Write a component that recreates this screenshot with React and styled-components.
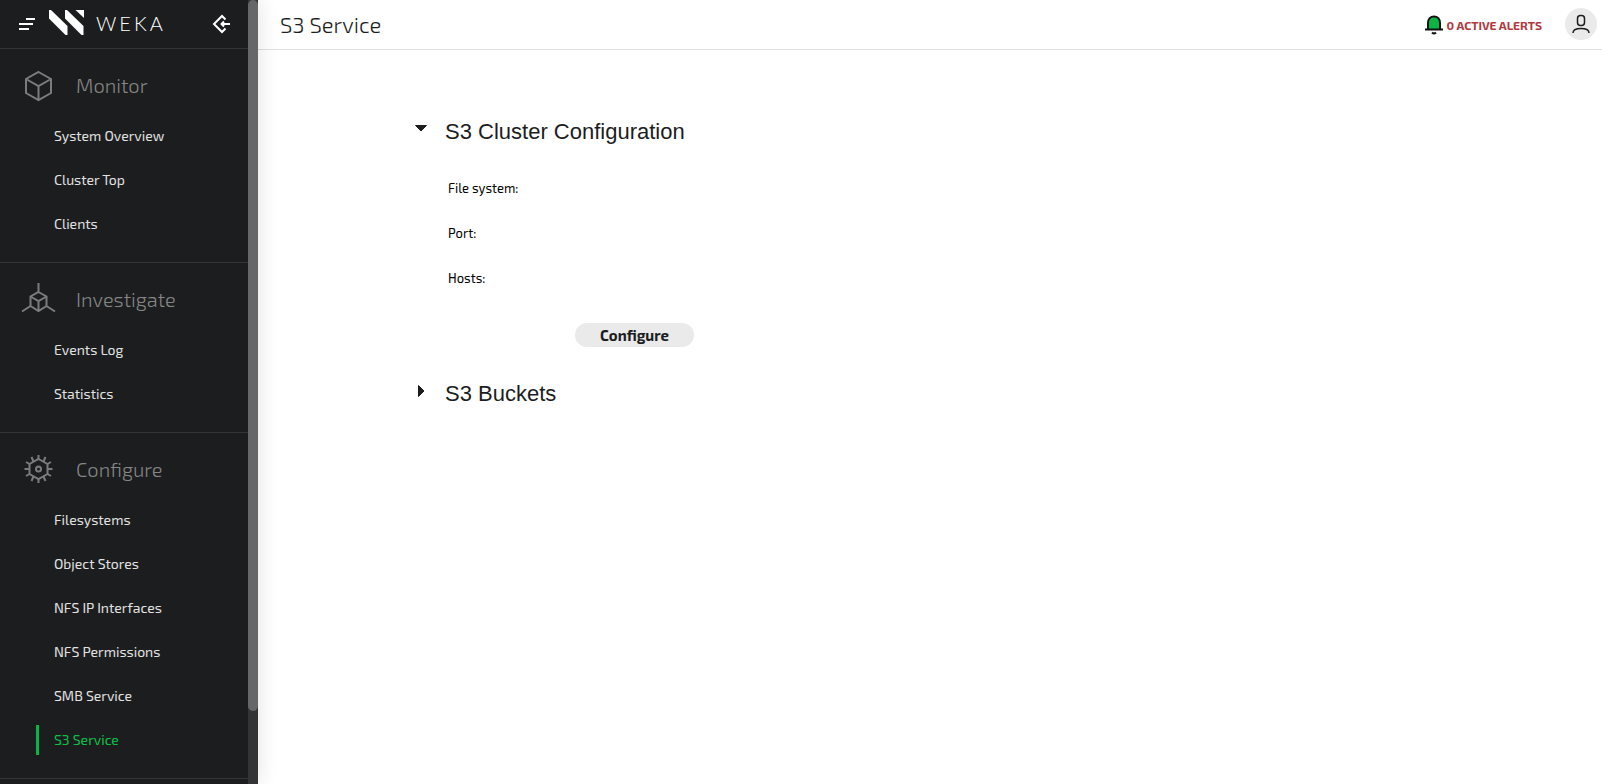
import React, { useState } from "react";
import styled, { createGlobalStyle } from "styled-components";

const GlobalStyle = createGlobalStyle`
  *, *::before, *::after { box-sizing: border-box; }
  body {
    margin: 0;
    background: #fff;
    color: #1c1d1e;
    font-family: "Exo 2", Roboto, "Liberation Sans", sans-serif;
    font-size: 14px;
  }
`;

const Page = styled.div`
  display: flex;
  height: 100vh;
  overflow: hidden;
`;

const Sidebar = styled.aside`
  display: flex;
  flex: none;
  background: #1c1d1e;
  box-shadow: 0 0 20px rgba(0, 0, 0, 0.12);
  z-index: 1;
`;

const SidebarBody = styled.div`
  width: 248px;
  overflow: hidden;
`;

const ScrollTrack = styled.div`
  width: 10px;
  background: #333435;
`;

const ScrollThumb = styled.div`
  height: 90.7%;
  border-radius: 5px;
  background: #666768;
`;

const Brand = styled.div`
  display: flex;
  align-items: center;
  height: 49px;
  padding: 0 17px 0 18px;
  border-bottom: 1px solid #333435;
  color: #fff;
`;

const IconButton = styled.button`
  display: flex;
  padding: 0;
  border: 0;
  background: none;
  color: inherit;
  cursor: pointer;
`;

const Logo = styled.a`
  display: flex;
  flex: 1;
  align-items: center;
  gap: 12px;
  margin-left: 13px;
  padding-bottom: 3px;
  color: inherit;
  text-decoration: none;
`;

const Wordmark = styled.span`
  font: 300 20px/24px Lato, sans-serif;
  letter-spacing: 3px;
`;

const Section = styled.section`
  padding: 16px 0;
  border-bottom: 1px solid #333435;
`;

const SectionTitle = styled.h2`
  display: flex;
  align-items: center;
  gap: 18px;
  height: 40px;
  margin: 0 0 9px;
  padding-left: 20px;
  color: #858686;
  font-size: 20px;
  font-weight: 300;

  svg { flex: none; color: #7b7c7c; }
`;

const NavList = styled.ul`
  margin: 0;
  padding: 0;
  list-style: none;
`;

const NavItem = styled.li`
  display: flex;
  align-items: center;
  height: 44px;
  padding-left: 36px;
`;

const NavLink = styled.a`
  height: 30px;
  padding-left: 15px;
  border-left: 3px solid ${(p) => (p.$active ? "#0bb544" : "transparent")};
  color: ${(p) => (p.$active ? "#0bc04a" : "#e2e2e2")};
  font-weight: 400;
  line-height: 30px;
  text-decoration: none;
`;

const Main = styled.main`
  flex: 1;
  min-width: 0;
`;

const TopBar = styled.header`
  display: flex;
  align-items: center;
  height: 50px;
  padding: 0 5px 2px 22px;
  border-bottom: 1px solid #e0e0e0;
`;

const PageTitle = styled.h1`
  flex: 1;
  margin: 0;
  color: #1c1d1e;
  font-size: 22px;
  font-weight: 300;
`;

const Alerts = styled.button`
  display: flex;
  align-items: center;
  gap: 4px;
  margin-right: 23px;
  padding: 2px 0 0;
  border: 0;
  background: none;
  color: #b03a40;
  font: inherit;
  font-size: 12px;
  font-weight: 700;
  cursor: pointer;
`;

const Avatar = styled.button`
  display: grid;
  place-items: center;
  width: 32px;
  height: 32px;
  padding: 0;
  border: 0;
  border-radius: 50%;
  background: #eaeaea;
  cursor: pointer;
`;

const Content = styled.div`
  max-width: 1030px;
  margin: 0 auto;
  padding-top: 62px;
`;

const PanelHeading = styled.h2`
  margin: 0;
  font-size: 22px;
  font-weight: 400;
`;

const PanelToggle = styled.button`
  display: flex;
  align-items: center;
  gap: 18px;
  height: 40px;
  padding: 0;
  border: 0;
  background: none;
  color: #1c1d1e;
  font: 400 22px/40px "Liberation Sans", Arial, sans-serif;
  cursor: pointer;

  svg { flex: none; margin-bottom: 6px; }
`;

const Form = styled.div`
  width: 373px;
  margin: 0 0 27px 33px;
  padding-top: 13px;
`;

const Details = styled.dl`
  margin: 0 0 23px;
`;

const Detail = styled.div`
  display: flex;
  height: 45px;
  align-items: center;
  color: #000;

  dt { font-size: 13px; }
  dd { margin: 0; }
`;

const ConfigureButton = styled.button`
  display: block;
  width: 119px;
  height: 24px;
  margin: 0 auto;
  padding: 0;
  border: 0;
  border-radius: 12px;
  background: #eaeaea;
  color: #1c1d1e;
  font: inherit;
  font-size: 15px;
  font-weight: 700;
  line-height: 24px;
  cursor: pointer;
`;

const MenuIcon = () => (
  <svg width="18" height="14" viewBox="0 0 18 14" fill="none" stroke="currentColor" strokeWidth="2">
    <path d="M8 2h9M1 7h14M1 12h10" />
  </svg>
);

const LogoMark = () => (
  <svg width="35" height="25" viewBox="0 0 35 25" fill="currentColor">
    <path d="M0 0H2L18.500 16V25H16.500L0 8.500ZM16 0H18L34.500 16V25H32.500L16 8.500ZM26.500 0H35V8Z" />
  </svg>
);

const CollapseIcon = () => (
  <svg width="20" height="20" viewBox="0 0 20 20" fill="none" stroke="currentColor" strokeWidth="2">
    <path d="M14.500 5.500L11 2L3 10L11 18L14.500 14.500M19 10H10M13 7.500L10.500 10L13 12.500" />
  </svg>
);

const MonitorIcon = () => (
  <svg width="38" height="34" viewBox="0 0 38 34" fill="none" stroke="currentColor" strokeWidth="2">
    <path d="M18.500 4L31 11V25L18.500 32L6 25V11ZM6 11L18.500 18L31 11M18.500 18V32" />
  </svg>
);

const InvestigateIcon = () => (
  <svg width="38" height="34" viewBox="0 0 38 34" fill="none" stroke="currentColor" strokeWidth="2">
    <path d="M18.500 1V10M18.500 10L26.500 14.500V24L18.500 29L10.500 24V14.500ZM10.500 14.500L18.500 19L26.500 14.500M18.500 19V29M10.500 24L2 29.500M26.500 24L35 29.500" />
  </svg>
);

const ConfigureIcon = () => (
  <svg width="38" height="34" viewBox="0 0 38 34" fill="none" stroke="currentColor" strokeWidth="2">
    <path d="M18.500 7L27.500 12V22L18.500 27L9.500 22V12Z" />
    <circle cx="18.500" cy="17" r="2.500" />
    <path d="M18.500 7V3M18.500 27V31M9.500 17H4.500M27.500 17H32.500M13.500 9.500L11.500 5M23.500 9.500L25.500 5M9.500 12L6 10M27.500 12L31 10M9.500 22L6 24M27.500 22L31 24M13.500 24.500L11.500 29M23.500 24.500L25.500 29" />
  </svg>
);

const BellIcon = () => (
  <svg width="18" height="20" viewBox="0 0 18 20">
    <path d="M3.500 14.500V8C3.500 4 6 2 9 2S14.500 4 14.500 8V14.500Z" fill="#0bb544" />
    <path d="M0 14.500H18M3 14.500V8C3 4 5.500 1.500 9 1.500S15 4 15 8V14.500M7 17.500Q9 19.500 11 17.500" fill="none" stroke="#111" strokeWidth="2" />
  </svg>
);

const UserIcon = () => (
  <svg width="18" height="20" viewBox="0 0 18 20" fill="none" stroke="#1c1d1e" strokeWidth="1.500">
    <rect x="5.500" y="1.500" width="7" height="10" rx="3" />
    <path d="M1 19C1 16 4 14.500 9 14.500S17 16 17 19" />
  </svg>
);

const Caret = ({ open }) => (
  <svg width="12" height="12" viewBox="0 0 12 12" fill="currentColor" stroke="currentColor" strokeLinejoin="round">
    <path d={open ? "M0.500 2.500H11.500L6 8Z" : "M3.500 0.500V11.500L9 6Z"} />
  </svg>
);

const sections = [
  { title: "Monitor", Icon: MonitorIcon, items: ["System Overview", "Cluster Top", "Clients"] },
  { title: "Investigate", Icon: InvestigateIcon, items: ["Events Log", "Statistics"] },
  {
    title: "Configure",
    Icon: ConfigureIcon,
    items: ["Filesystems", "Object Stores", "NFS IP Interfaces", "NFS Permissions", "SMB Service", "S3 Service"],
  },
];

const fields = ["File system:", "Port:", "Hosts:"];

function Panel({ title, defaultOpen = false, children }) {
  const [open, setOpen] = useState(defaultOpen);
  return (
    <section>
      <PanelHeading>
        <PanelToggle type="button" aria-expanded={open} onClick={() => setOpen(!open)}>
          <Caret open={open} />
          {title}
        </PanelToggle>
      </PanelHeading>
      {open && children}
    </section>
  );
}

export default function App() {
  return (
    <>
      <GlobalStyle />
      <Page>
        <Sidebar>
          <SidebarBody>
            <Brand>
              <IconButton type="button" aria-label="Menu"><MenuIcon /></IconButton>
              <Logo href="#"><LogoMark /><Wordmark>WEKA</Wordmark></Logo>
              <IconButton type="button" aria-label="Collapse sidebar"><CollapseIcon /></IconButton>
            </Brand>
            <nav>
              {sections.map(({ title, Icon, items }) => (
                <Section key={title}>
                  <SectionTitle><Icon />{title}</SectionTitle>
                  <NavList>
                    {items.map((item) => (
                      <NavItem key={item}>
                        <NavLink href="#" $active={item === "S3 Service"}>{item}</NavLink>
                      </NavItem>
                    ))}
                  </NavList>
                </Section>
              ))}
            </nav>
          </SidebarBody>
          <ScrollTrack><ScrollThumb /></ScrollTrack>
        </Sidebar>
        <Main>
          <TopBar>
            <PageTitle>S3 Service</PageTitle>
            <Alerts type="button"><BellIcon />0 ACTIVE ALERTS</Alerts>
            <Avatar type="button" aria-label="Account"><UserIcon /></Avatar>
          </TopBar>
          <Content>
            <Panel title="S3 Cluster Configuration" defaultOpen>
              <Form>
                <Details>
                  {fields.map((label) => (
                    <Detail key={label}><dt>{label}</dt><dd /></Detail>
                  ))}
                </Details>
                <ConfigureButton type="button">Configure</ConfigureButton>
              </Form>
            </Panel>
            <Panel title="S3 Buckets" />
          </Content>
        </Main>
      </Page>
    </>
  );
}
